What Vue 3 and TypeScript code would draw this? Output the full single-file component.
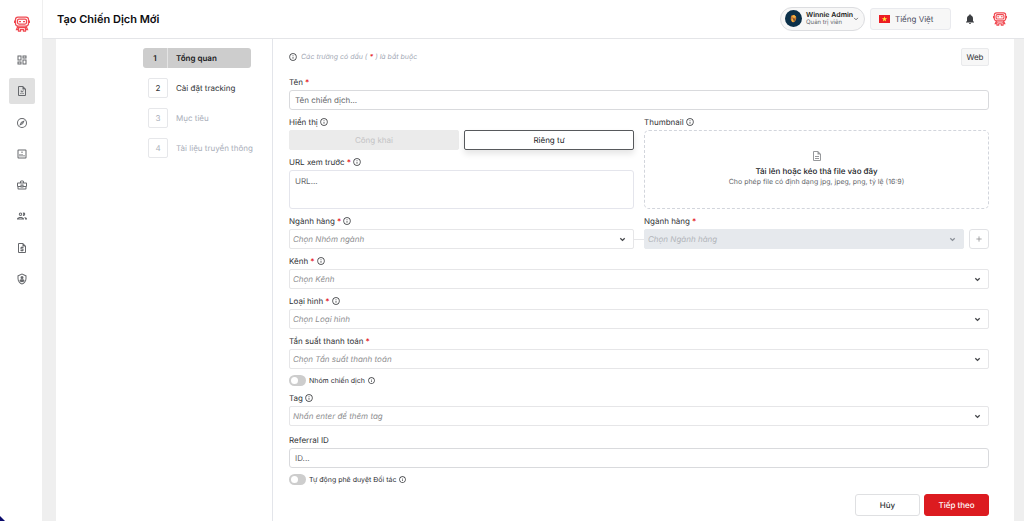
<script setup lang="ts">
import { ref } from 'vue'

interface Step {
  id: number
  label: string
  state: 'active' | 'ready' | 'locked'
}

interface NavItem {
  label: string
  path: string
}

const steps: Step[] = [
  { id: 1, label: 'Tổng quan', state: 'active' },
  { id: 2, label: 'Cài đặt tracking', state: 'ready' },
  { id: 3, label: 'Mục tiêu', state: 'locked' },
  { id: 4, label: 'Tài liệu truyền thông', state: 'locked' },
]

const nav: NavItem[] = [
  {
    label: 'Bảng điều khiển',
    path: 'M19 5v2h-4V5h4M9 5v6H5V5h4m10 8v6h-4v-6h4M9 17v2H5v-2h4M21 3h-8v6h8V3zM11 3H3v10h8V3zm10 8h-8v10h8V11zm-10 4H3v6h8v-6z',
  },
  {
    label: 'Chiến dịch',
    path: 'M14 2H6a2 2 0 0 0-2 2v16a2 2 0 0 0 2 2h12a2 2 0 0 0 2-2V8l-6-6zM6 20V4h7v5h5v11H6zM8 11h2.2l5.8 7h-2.2zM14 11h2l-6 7H8zM8 11h4v1.5H8z',
  },
  {
    label: 'Khám phá',
    path: 'M12 2a10 10 0 1 0 0 20 10 10 0 0 0 0-20zm0 18a8 8 0 1 1 0-16 8 8 0 0 1 0 16zm-5.5-2.500l7.510-3.490L17.500 6.500 9.990 9.990 6.500 17.500zm5.500-6.600a1.100 1.100 0 1 1 0 2.200 1.100 1.100 0 0 1 0-2.200z',
  },
  {
    label: 'Báo cáo',
    path: 'M19 3H5a2 2 0 0 0-2 2v14a2 2 0 0 0 2 2h14a2 2 0 0 0 2-2V5a2 2 0 0 0-2-2zm0 16H5V5h14v14zM7 12h2v5H7zm4-5h2v3h-2zm0 5h2v5h-2zm4 2h2v3h-2z',
  },
  {
    label: 'Công việc',
    path: 'M20 7h-4V5l-2-2h-4L8 5v2H4a2 2 0 0 0-2 2v5c0 .75.4 1.380 1 1.730V19a2 2 0 0 0 2 2h14a2 2 0 0 0 2-2v-3.280c.59-.35 1-.99 1-1.720V9a2 2 0 0 0-2-2zM10 5h4v2h-4V5zM4 9h16v5h-5v-3H9v3H4V9zm9 6h-2v-2h2v2zm6 4H5v-3h4v1h6v-1h4v3z',
  },
  {
    label: 'Đối tác',
    path: 'M9 13.750c-2.340 0-7 1.170-7 3.500V19h14v-1.750c0-2.330-4.660-3.500-7-3.500zM4.340 17c.84-.58 2.870-1.250 4.660-1.250s3.820.67 4.660 1.250H4.340zM9 12a3.500 3.500 0 1 0 0-7 3.500 3.500 0 0 0 0 7zm0-5a1.500 1.500 0 1 1 0 3 1.500 1.500 0 0 1 0-3zm7.040 6.810c1.160.84 1.960 1.960 1.960 3.440V19h4v-1.750c0-2.020-3.500-3.170-5.960-3.440zM15 12a3.500 3.500 0 1 0-1.500-6.660 5.480 5.480 0 0 1 0 6.320c.45.22.96.34 1.500.34z',
  },
  {
    label: 'Thanh toán',
    path: 'M14 2H6a2 2 0 0 0-2 2v16a2 2 0 0 0 2 2h12a2 2 0 0 0 2-2V8l-6-6zm4 18H6V4h7v5h5v11zM11 19h2v-1h1a1 1 0 0 0 1-1v-3a1 1 0 0 0-1-1h-3v-1h4v-2h-2V9h-2v1h-1a1 1 0 0 0-1 1v3a1 1 0 0 0 1 1h3v1H9v2h2v1z',
  },
  {
    label: 'Quản trị',
    path: 'M12 1L3 5v6c0 5.550 3.840 10.740 9 12 5.160-1.260 9-6.450 9-12V5l-9-4zm7 10c0 4.520-2.980 8.690-7 9.930-4.020-1.240-7-5.410-7-9.930V6.300l7-3.110 7 3.110V11zM12 6a3 3 0 1 0 0 6 3 3 0 0 0 0-6zm-5 9c0 1.500 2.500 3.500 5 3.500s5-2 5-3.500-2.500-2.300-5-2.300-5 .8-5 2.300z',
  },
]

const infoPath =
  'M11 7h2v2h-2V7zm0 4h2v6h-2v-6zm1-9a10 10 0 1 0 0 20 10 10 0 0 0 0-20zm0 18a8 8 0 1 1 0-16 8 8 0 0 1 0 16z'
const chevronPath = 'M3 5l5 5 5-5'

const name = ref('')
const url = ref('')
const referral = ref('')
const group = ref('')
const category = ref('')
const channel = ref('')
const kind = ref('')
const frequency = ref('')
const tag = ref('')
const grouped = ref(false)
const autoApprove = ref(false)
</script>

<template>
  <div class="app">
    <aside class="rail">
      <a href="#" class="brand" aria-label="Trang chủ">
        <svg class="bot" viewBox="0 0 32 32">
          <rect x="3" y="2" width="26" height="18" rx="5" />
          <rect x="7" y="6" width="18" height="10" rx="3" />
          <path d="M10 11h4M18 11h4M1 9v5M31 9v5M8 20l-3 7h4M24 20l3 7h-4M9 23h14v7h-4v-3h-6v3H9z" />
        </svg>
      </a>
      <nav class="nav">
        <a
          v-for="(item, i) in nav"
          :key="item.label"
          href="#"
          class="nav-item"
          :class="{ current: i === 1 }"
          :aria-label="item.label"
        >
          <svg viewBox="0 0 24 24"><path :d="item.path" fill-rule="evenodd" /></svg>
        </a>
      </nav>
      <span class="corner"></span>
    </aside>

    <div class="main">
      <header class="topbar">
        <h1>Tạo Chiến Dịch Mới</h1>
        <div class="tools">
          <button type="button" class="profile">
            <svg class="avatar" viewBox="0 0 32 32">
              <circle cx="16" cy="16" r="16" fill="#0b3049" />
              <path d="M11 14c0-4 3-5 6-4s5 3 4 7-3 7-6 6-5-4-4-9z" fill="#c87932" />
              <path d="M13 12l4-3 4 4-4 2zM12 18l3-1 2 4-3 2z" fill="#f2b441" />
              <path d="M15 15l4 2-1 4-3-2z" fill="#85572f" />
            </svg>
            <span class="who">
              <strong>Winnie Admin</strong>
              <small>Quản trị viên</small>
            </span>
            <svg class="chev tiny" viewBox="0 0 16 16"><path :d="chevronPath" /></svg>
          </button>
          <button type="button" class="language">
            <svg class="flag" viewBox="0 0 33 24">
              <rect width="33" height="24" fill="#ec1c24" />
              <path d="M16.500 4l2 5.800h6.100l-4.900 3.600 1.800 5.800-5-3.500-5 3.500 1.800-5.800-4.900-3.600h6.100z" fill="#ffeb3b" />
            </svg>
            Tiếng Việt
          </button>
          <button type="button" class="plain" aria-label="Thông báo">
            <svg class="bell" viewBox="0 0 24 24">
              <path d="M12 22a2 2 0 0 0 2-2h-4a2 2 0 0 0 2 2zm6-6v-5c0-3.070-1.640-5.640-4.500-6.320V4a1.500 1.500 0 0 0-3 0v.68C7.630 5.360 6 7.920 6 11v5l-2 2v1h16v-1l-2-2z" />
            </svg>
          </button>
          <button type="button" class="plain" aria-label="Trợ lý">
            <svg class="bot small" viewBox="0 0 32 32">
              <rect x="3" y="2" width="26" height="18" rx="5" />
              <rect x="7" y="6" width="18" height="10" rx="3" />
              <path d="M10 11h4M18 11h4M1 9v5M31 9v5M8 20l-3 7h4M24 20l3 7h-4M9 23h14v7h-4v-3h-6v3H9z" />
            </svg>
          </button>
        </div>
      </header>

      <div class="sheet">
        <ol class="steps">
          <li v-for="s in steps" :key="s.id" class="step" :class="s.state">
            <span class="num">{{ s.id }}</span>
            <span class="step-label">{{ s.label }}</span>
          </li>
        </ol>

        <form class="form" @submit.prevent>
          <div class="intro">
            <svg class="info" viewBox="1 1 22 22"><path :d="infoPath" /></svg>
            <em>Các trường có dấu ( <b>*</b> ) là bắt buộc</em>
            <button type="button" class="web">Web</button>
          </div>

          <div class="field">
            <label for="name">Tên <b>*</b></label>
            <input id="name" v-model="name" type="text" class="control" placeholder="Tên chiến dịch..." />
          </div>

          <div class="pair">
            <div class="stack">
              <div class="field">
                <span class="label">Hiển thị <svg class="info" viewBox="1 1 22 22"><path :d="infoPath" /></svg></span>
                <div class="choices">
                  <button type="button" class="choice" disabled>Công khai</button>
                  <button type="button" class="choice picked">Riêng tư</button>
                </div>
              </div>
              <div class="field">
                <label for="url">URL xem trước <b>*</b> <svg class="info" viewBox="1 1 22 22"><path :d="infoPath" /></svg></label>
                <textarea id="url" v-model="url" class="control area" placeholder="URL..."></textarea>
              </div>
            </div>
            <div class="field">
              <span class="label">Thumbnail <svg class="info" viewBox="1 1 22 22"><path :d="infoPath" /></svg></span>
              <button type="button" class="drop">
                <svg viewBox="0 0 24 24">
                  <path d="M8 16h8v2H8zm0-4h8v2H8zm6-10H6a2 2 0 0 0-2 2v16a2 2 0 0 0 2 2h12a2 2 0 0 0 2-2V8l-6-6zm4 18H6V4h7v5h5v11z" />
                </svg>
                <strong>Tải lên hoặc kéo thả file vào đây</strong>
                <small>Cho phép file có định dạng jpg, jpeg, png, tỷ lệ (16:9)</small>
              </button>
            </div>
          </div>

          <div class="pair linked">
            <div class="field">
              <label for="group">Ngành hàng <b>*</b> <svg class="info" viewBox="1 1 22 22"><path :d="infoPath" /></svg></label>
              <div class="picker">
                <select id="group" v-model="group" class="control"><option value="">Chọn Nhóm ngành</option></select>
                <svg class="chev" viewBox="0 0 16 16"><path :d="chevronPath" /></svg>
              </div>
            </div>
            <span class="link"></span>
            <div class="field">
              <label for="category">Ngành hàng <b>*</b></label>
              <div class="with-add">
                <div class="picker">
                  <select id="category" v-model="category" class="control" disabled><option value="">Chọn Ngành hàng</option></select>
                  <svg class="chev faded" viewBox="0 0 16 16"><path :d="chevronPath" /></svg>
                </div>
                <button type="button" class="add" aria-label="Thêm ngành hàng">
                  <svg viewBox="0 0 16 16"><path d="M8 1v14M1 8h14" /></svg>
                </button>
              </div>
            </div>
          </div>

          <div class="field">
            <label for="channel">Kênh <b>*</b> <svg class="info" viewBox="1 1 22 22"><path :d="infoPath" /></svg></label>
            <div class="picker">
              <select id="channel" v-model="channel" class="control"><option value="">Chọn Kênh</option></select>
              <svg class="chev" viewBox="0 0 16 16"><path :d="chevronPath" /></svg>
            </div>
          </div>

          <div class="field">
            <label for="kind">Loại hình <b>*</b> <svg class="info" viewBox="1 1 22 22"><path :d="infoPath" /></svg></label>
            <div class="picker">
              <select id="kind" v-model="kind" class="control"><option value="">Chọn Loại hình</option></select>
              <svg class="chev" viewBox="0 0 16 16"><path :d="chevronPath" /></svg>
            </div>
          </div>

          <div class="field">
            <label for="frequency">Tần suất thanh toán <b>*</b></label>
            <div class="picker">
              <select id="frequency" v-model="frequency" class="control"><option value="">Chọn Tần suất thanh toán</option></select>
              <svg class="chev" viewBox="0 0 16 16"><path :d="chevronPath" /></svg>
            </div>
          </div>

          <label class="toggle">
            <input v-model="grouped" type="checkbox" role="switch" />
            <span>Nhóm chiến dịch</span>
            <svg class="info" viewBox="1 1 22 22"><path :d="infoPath" /></svg>
          </label>

          <div class="field">
            <label for="tag">Tag <svg class="info" viewBox="1 1 22 22"><path :d="infoPath" /></svg></label>
            <div class="picker">
              <select id="tag" v-model="tag" class="control"><option value="">Nhấn enter để thêm tag</option></select>
              <svg class="chev" viewBox="0 0 16 16"><path :d="chevronPath" /></svg>
            </div>
          </div>

          <div class="field spaced">
            <label for="referral">Referral ID</label>
            <input id="referral" v-model="referral" type="text" class="control" placeholder="ID..." />
          </div>

          <label class="toggle">
            <input v-model="autoApprove" type="checkbox" role="switch" />
            <span>Tự động phê duyệt Đối tác</span>
            <svg class="info" viewBox="1 1 22 22"><path :d="infoPath" /></svg>
          </label>

          <div class="actions">
            <button type="button" class="action">Hủy</button>
            <button type="submit" class="action primary">Tiếp theo</button>
          </div>
        </form>
      </div>
    </div>
  </div>
</template>

<style>
body {
  margin: 0;
  background: #fff;
}
</style>

<style scoped>
* {
  box-sizing: border-box;
}

.app {
  display: flex;
  min-height: 100vh;
  font: 400 8px/12px Inter, 'Noto Sans', sans-serif;
  text-rendering: geometricPrecision;
  color: #303236;
}

button,
input,
select,
textarea {
  margin: 0;
  font: inherit;
  color: inherit;
  text-rendering: inherit;
}

button {
  padding: 0;
  cursor: pointer;
}

svg {
  display: block;
  flex: none;
}

.rail {
  flex: none;
  width: 42px;
  display: flex;
  flex-direction: column;
  align-items: center;
  padding: 16px 0 0 2px;
  gap: 15px;
}

.bot {
  width: 16px;
  height: 16px;
  fill: none;
  stroke: #f04850;
  stroke-width: 2.5;
}

.bot.small {
  width: 14px;
  height: 14px;
}

.nav {
  display: flex;
  flex-direction: column;
  justify-content: space-between;
  height: 245px;
}

.nav-item {
  display: grid;
  place-items: center;
  width: 26px;
  height: 26px;
  border-radius: 2px;
  fill: #66686c;
}

.nav-item svg {
  width: 12px;
  height: 12px;
}

.nav-item.current {
  background: #e0e0e0;
}

.corner {
  position: fixed;
  left: -5px;
  bottom: -5px;
  width: 10px;
  height: 10px;
  background: #0b0b6b;
  clip-path: polygon(0 0, 50% 0, 100% 50%, 100% 100%, 0 100%);
}

.main {
  flex: 1;
  min-width: 0;
  display: flex;
  flex-direction: column;
  background: #efefef;
}

.topbar {
  display: flex;
  align-items: center;
  justify-content: space-between;
  height: 39px;
  padding: 0 17px 1px 14px;
  background: #fff;
  border-bottom: 1px solid #e4e5e8;
  border-left: 1px solid #efefef;
}

h1 {
  margin: 0;
  font-size: 11px;
  line-height: 16px;
  font-weight: 600;
  color: #0c0c0e;
}

.tools {
  display: flex;
  align-items: center;
}

.profile {
  display: flex;
  align-items: center;
  width: 85px;
  height: 24px;
  padding: 0 5px 0 4px;
  gap: 4px;
  border: 1px solid #dcdde0;
  border-radius: 12px;
  background: #f7f7f7;
  text-align: left;
}

.avatar {
  width: 17px;
  height: 17px;
}

.who {
  flex: 1;
  display: flex;
  flex-direction: column;
  min-width: 0;
  white-space: nowrap;
}

.who strong {
  font-size: 7px;
  line-height: 8px;
  font-weight: 600;
  color: #1c1c20;
}

.who small {
  font-size: 6px;
  line-height: 8px;
  color: #66686e;
}

.language {
  display: flex;
  align-items: center;
  gap: 5px;
  width: 81px;
  height: 22px;
  margin-left: 5px;
  padding: 0 8px;
  border: 1px solid #e9eaee;
  border-radius: 3px;
  background: #f7f7f7;
  color: #4a4d5e;
}

.flag {
  width: 11px;
  height: 8px;
}

.plain {
  border: 0;
  background: none;
  margin-left: 13px;
}

.plain + .plain {
  margin-left: 17px;
}

.bell {
  width: 12px;
  height: 12px;
  fill: #3c3e42;
}

.sheet {
  flex: 1;
  display: flex;
  margin: 0 10px 0 14px;
  background: #fff;
}

.steps {
  flex: none;
  width: 216px;
  margin: 0;
  padding: 9px 21px 0 87px;
  list-style: none;
  display: flex;
  flex-direction: column;
  gap: 10px;
}

.step {
  display: flex;
  align-items: center;
  height: 20px;
  padding-left: 5px;
}

.num {
  flex: none;
  display: grid;
  place-items: center;
  width: 20px;
  height: 20px;
  border: 1px solid #e6e7ea;
  border-radius: 2px;
}

.step-label {
  margin-left: 8px;
  white-space: nowrap;
}

.step.active {
  padding: 0;
  background: #cdcdcd;
  border-radius: 3px;
  font-weight: 600;
  color: #1b1b1d;
}

.step.active .num {
  width: 25px;
  border: 0;
  border-right: 1px solid #e4e4e4;
  border-radius: 0;
}

.step.locked {
  color: #a9aeb9;
}

.form {
  flex: 1;
  min-width: 0;
  display: flex;
  flex-direction: column;
  gap: 6px;
  padding: 9px 25px 5px 16px;
  border-left: 1px solid #e3e5ea;
}

.intro {
  display: flex;
  align-items: center;
  gap: 4px;
  height: 18px;
  margin-bottom: 4px;
}

.intro em {
  flex: 1;
  font-size: 7px;
  color: #a3a9b5;
}

b {
  font-weight: 600;
  color: #e5252c;
}

.web {
  width: 28px;
  height: 18px;
  border: 1px solid #e9eaec;
  border-radius: 2px;
  background: #f7f7f7;
}

.info {
  width: 8px;
  height: 8px;
  fill: #303236;
}

.field {
  display: flex;
  flex-direction: column;
  gap: 2px;
  min-width: 0;
}

.field.spaced {
  margin-top: 2px;
}

.label,
.field > label {
  display: flex;
  align-items: center;
  gap: 2px;
  height: 12px;
  white-space: nowrap;
}

.control {
  width: 100%;
  height: 20px;
  padding: 0 5px;
  border: 1px solid #d9dadd;
  border-radius: 3px;
  background: #fff;
  outline: none;
}

.control::placeholder {
  color: #66686c;
  opacity: 1;
}

.area {
  display: block;
  height: 39px;
  padding-top: 4px;
  border-color: #e4e5ec;
  resize: none;
}

select.control {
  appearance: none;
  padding: 0 3px;
  border-color: #e6e6e8;
  border-radius: 2px;
  font-style: italic;
  color: #8e8e90;
}

select.control:disabled {
  background: #e6e9ed;
  border-color: #e6e9ed;
  color: #b2b5ba;
  opacity: 1;
}

.picker {
  position: relative;
  flex: 1;
  min-width: 0;
}

.chev {
  width: 7px;
  height: 7px;
  fill: none;
  stroke: #45474b;
  stroke-width: 3;
}

.chev.tiny {
  width: 6px;
  height: 6px;
  stroke-width: 2;
}

.chev.faded {
  stroke: #8b9098;
}

.picker .chev {
  position: absolute;
  right: 8px;
  top: 7px;
  pointer-events: none;
}

.pair {
  display: grid;
  grid-template-columns: 1fr 1fr;
  gap: 10px;
}

.pair.linked {
  grid-template-columns: 1fr 10px 1fr;
  gap: 0;
}

.link {
  align-self: end;
  height: 10px;
  border-top: 1px solid #e6e6e8;
}

.stack {
  display: flex;
  flex-direction: column;
  gap: 6px;
  min-width: 0;
}

.choices {
  display: grid;
  grid-template-columns: 1fr 1fr;
  gap: 5px;
}

.choice {
  height: 20px;
  border: 1px solid #ebebeb;
  border-radius: 2px;
  background: #ebebeb;
  color: #c3c3c5;
}

.choice.picked {
  border-color: #57595c;
  background: #fff;
  color: #222427;
  box-shadow: 0 4px 6px #0000001a;
}

.drop {
  flex: 1;
  display: flex;
  flex-direction: column;
  align-items: center;
  justify-content: center;
  padding-bottom: 2px;
  border: 1px dashed #d2d5dc;
  border-radius: 5px;
  background: #fff;
}

.drop svg {
  width: 12px;
  height: 12px;
  margin-bottom: 3px;
  fill: #97999c;
}

.drop strong {
  font-weight: 500;
  color: #222427;
}

.drop small {
  font-size: 7px;
  line-height: 10px;
  color: #66686c;
}

.with-add {
  display: flex;
  gap: 5px;
}

.add {
  display: grid;
  place-items: center;
  width: 20px;
  height: 20px;
  border: 1px solid #e1e2e5;
  border-radius: 3px;
  background: #fff;
}

.add svg {
  width: 6px;
  height: 6px;
  stroke: #88898c;
  stroke-width: 2;
}

.toggle {
  display: flex;
  align-items: center;
  align-self: flex-start;
  gap: 3px;
  height: 11px;
  font-size: 7px;
}

.toggle input {
  appearance: none;
  display: flex;
  align-items: center;
  width: 17px;
  height: 11px;
  padding: 0 2px;
  border-radius: 6px;
  background: #cdcdcd;
}

.toggle input::before {
  content: '';
  width: 7px;
  height: 7px;
  border-radius: 50%;
  background: #fff;
}

.toggle input:checked {
  justify-content: flex-end;
  background: #dc1b20;
}

.toggle .info {
  width: 7px;
  height: 7px;
}

.actions {
  display: flex;
  justify-content: flex-end;
  gap: 4px;
  margin-top: 3px;
}

.action {
  width: 65px;
  height: 22px;
  border: 1px solid #dfe0e2;
  border-radius: 3px;
  background: #fff;
  font-weight: 500;
  color: #303236;
}

.action.primary {
  border-color: #dc1b20;
  background: #dc1b20;
  color: #fff;
}
</style>
